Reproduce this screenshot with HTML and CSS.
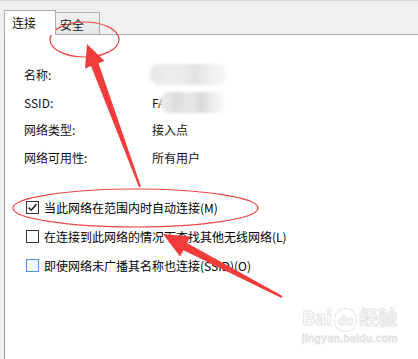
FILE: index.html
```html
<!DOCTYPE html>
<html lang="zh-CN">
<head>
    <meta charset="UTF-8">
    <meta name="viewport" content="width=device-width, initial-scale=1.0">
    <title>无线网络属性</title>
    <link rel="stylesheet" href="styles.css">
</head>
<body>
    <div class="screen">
        <div class="tabs">
            <div class="tab active">连接</div>
            <div class="tab">安全</div>
        </div>

        <div class="panel">
            <div class="props">
                <div class="label">名称:</div>
                <div class="value"><span class="blur blur-name"></span></div>
                <div class="label">SSID:</div>
                <div class="value">FA<span class="blur blur-ssid"></span></div>
                <div class="label">网络类型:</div>
                <div class="value">接入点</div>
                <div class="label">网络可用性:</div>
                <div class="value">所有用户</div>
            </div>

            <div class="options">
                <div class="option">
                    <span class="box">
                        <svg width="11" height="11" viewBox="0 0 11 11"><path d="M1.5 5.5 L4.2 8.2 L9.5 2.2" fill="none" stroke="#1a1a1a" stroke-width="1.6"/></svg>
                    </span>
                    当此网络在范围内时自动连接(M)
                </div>
                <div class="option">
                    <span class="box"></span>
                    在连接到此网络的情况下查找其他无线网络(L)
                </div>
                <div class="option">
                    <span class="box hover"></span>
                    即使网络未广播其名称也连接(SSID)(O)
                </div>
            </div>
        </div>

        <!-- 红色标注 -->
        <svg class="marks" width="418" height="359" viewBox="0 0 418 359">
            <ellipse cx="84.5" cy="39.5" rx="34.5" ry="17.5" fill="none" stroke="#ec4646" stroke-width="1.2"/>
            <ellipse cx="135.5" cy="208" rx="122.5" ry="19" fill="none" stroke="#ec4646" stroke-width="1.2"/>
            <polygon points="87,44 104.5,61 98.5,63.2 141,186.7 139,187.3 91,66 85,68.5" fill="#f23c3c"/>
            <polygon points="163,234 190.5,236.5 187,243 282.5,296 281.5,298 183.4,250.2 180,256.5" fill="#f23c3c"/>
        </svg>

        <div class="watermark">
            <div class="wm-logo">Bai<span class="wm-paw">du</span>经验</div>
            <div class="wm-url">jingyan.baidu.com</div>
        </div>
    </div>
</body>
</html>
```

FILE: styles.css
```css
body {
    margin: 0;
    font-family: "Noto Sans CJK SC", "Microsoft YaHei", sans-serif;
    font-size: 12px;
    color: #111;
    background-color: #f0f0f0;
}

.screen {
    position: relative;
    width: 418px;
    height: 359px;
    overflow: hidden;
    border-top: 1px solid #d6d6d6;
    box-sizing: border-box;
    display: flex;
    flex-direction: column;
}

.tabs {
    display: flex;
    align-items: flex-end;
    height: 24px;
    margin-top: 9px;
    padding-left: 4px;
}

.tab {
    display: flex;
    align-items: center;
    box-sizing: border-box;
    line-height: 12px;
}

.tab.active {
    position: relative;
    z-index: 1;
    width: 52px;
    height: 25px;
    margin-bottom: -1px;
    padding-left: 7px;
    border: 1px solid #adadad;
    border-bottom: none;
    background-color: #fff;
}

.tab:not(.active) {
    width: 44px;
    height: 22px;
    padding-left: 4px;
    padding-top: 2px;
    border-top: 1px solid #adadad;
    border-right: 1px solid #adadad;
    background: linear-gradient(#f2f2f2, #e6e6e6);
}

.panel {
    flex: 1;
    margin-left: 4px;
    border-left: 1px solid #a0a0a0;
    border-top: 1px solid #adadad;
    background-color: #fff;
}

.props {
    display: grid;
    grid-template-columns: 128px auto;
    grid-auto-rows: 27.5px;
    align-items: center;
    padding: 26px 0 0 19px;
}

.value {
    display: flex;
    align-items: center;
}

.blur {
    display: inline-block;
    height: 21px;
    border-radius: 9px;
    filter: blur(1.5px);
    background: linear-gradient(90deg, #e6e6e6, #ececec 25%, #e9e9e9 45%, #e2e2e2 60%, #efefef 80%, #f6f6f6);
}

.blur-name {
    width: 76px;
    margin-left: -2px;
}

.blur-ssid {
    width: 64px;
    margin-left: -5px;
    background: linear-gradient(90deg, #ececec, #dcdcdc 25%, #e6e6e6 45%, #dadada 65%, #efefef 85%, #f6f6f6);
}

.options {
    margin-top: 22px;
    padding-left: 21px;
}

.option {
    display: flex;
    align-items: center;
    gap: 5px;
    height: 28px;
    margin-bottom: 1px;
    color: #000;
}

.box {
    display: flex;
    align-items: center;
    justify-content: center;
    width: 13px;
    height: 13px;
    box-sizing: border-box;
    border: 1px solid #333;
    background-color: #fff;
}

.box.hover {
    border-color: #4f93dc;
    background-color: #f2f8fe;
}

.marks {
    position: absolute;
    top: -1px;
    left: 0;
    pointer-events: none;
}

.watermark {
    position: absolute;
    left: 302px;
    top: 305px;
    color: #fff;
    -webkit-text-stroke: 1px #e3e3e3;
    font-family: "DejaVu Sans", sans-serif;
}

.wm-logo {
    font-size: 19px;
    font-weight: bold;
    line-height: 22px;
    font-family: "Noto Sans CJK SC", sans-serif;
}

.wm-paw {
    display: inline-block;
    margin: 0 2px;
    padding: 0 3px;
    font-size: 12px;
    border: 1px solid #e6e6e6;
    border-radius: 50% 50% 45% 45%;
    -webkit-text-stroke: 0.8px #e3e3e3;
}

.wm-url {
    font-size: 10px;
    line-height: 14px;
    letter-spacing: 0.2px;
}
```
